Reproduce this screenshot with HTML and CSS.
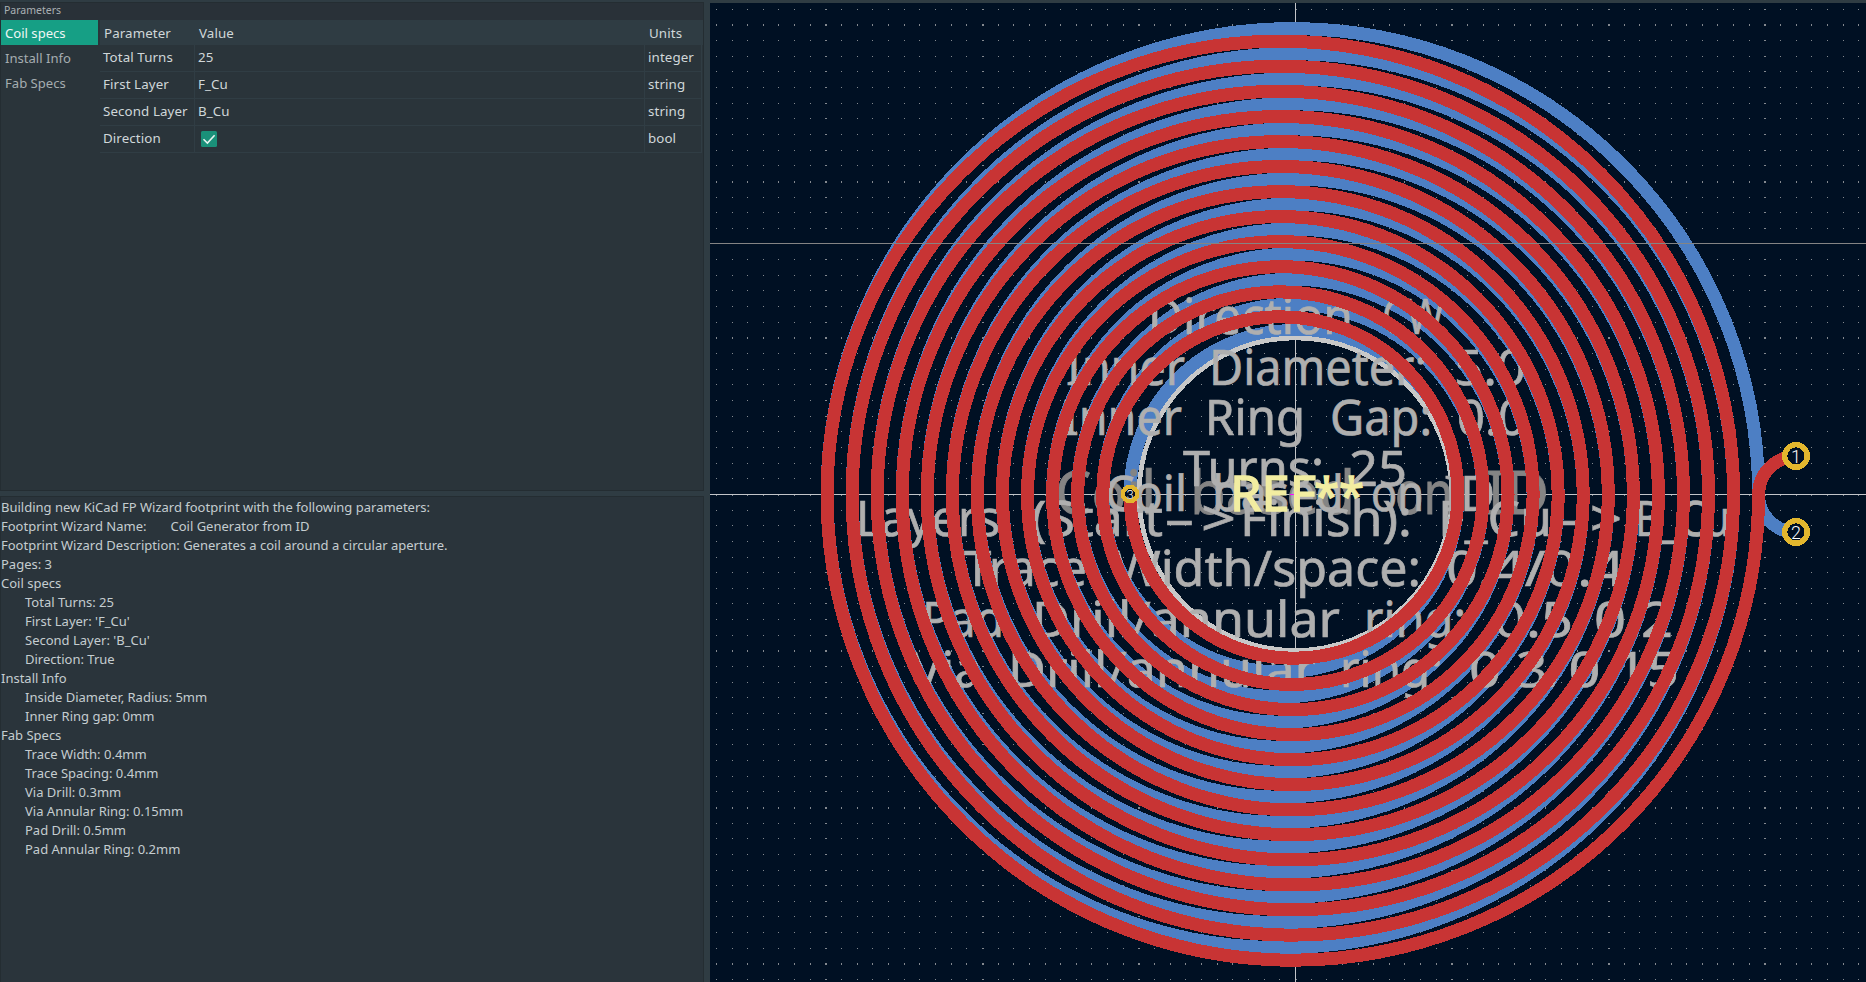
FILE: index.html
```html
<!DOCTYPE html>
<html lang="en">
<head>
<meta charset="utf-8">
<title>Footprint Wizard</title>
<link rel="stylesheet" href="styles.css">
</head>
<body>
<div class="window">
  <div class="sidebar">
    <section class="params">
      <div class="caption">Parameters</div>
      <div class="params-body">
        <ul class="pages">
          <li class="page active">Coil specs</li>
          <li class="page">Install Info</li>
          <li class="page">Fab Specs</li>
        </ul>
        <div class="grid">
          <div class="row head"><span>Parameter</span><span>Value</span><span>Units</span></div>
          <div class="row"><span>Total Turns</span><span>25</span><span>integer</span></div>
          <div class="row"><span>First Layer</span><span>F_Cu</span><span>string</span></div>
          <div class="row"><span>Second Layer</span><span>B_Cu</span><span>string</span></div>
          <div class="row"><span>Direction</span><span><svg class="check" viewBox="0 0 16 16"><rect width="16" height="16" rx="1.5" fill="#1a9079"/><path d="M2.5 8.2 6.4 12 13.6 4.2" fill="none" stroke="#e6f2ef" stroke-width="1.6"/></svg></span><span>bool</span></div>
        </div>
      </div>
    </section>
    <pre class="log">Building new KiCad FP Wizard footprint with the following parameters:
Footprint Wizard Name:<span class="tab"></span>Coil Generator from ID
Footprint Wizard Description: Generates a coil around a circular aperture.
Pages: 3
Coil specs
<span class="indent"></span>Total Turns: 25
<span class="indent"></span>First Layer: 'F_Cu'
<span class="indent"></span>Second Layer: 'B_Cu'
<span class="indent"></span>Direction: True
Install Info
<span class="indent"></span>Inside Diameter, Radius: 5mm
<span class="indent"></span>Inner Ring gap: 0mm
Fab Specs
<span class="indent"></span>Trace Width: 0.4mm
<span class="indent"></span>Trace Spacing: 0.4mm
<span class="indent"></span>Via Drill: 0.3mm
<span class="indent"></span>Via Annular Ring: 0.15mm
<span class="indent"></span>Pad Drill: 0.5mm
<span class="indent"></span>Pad Annular Ring: 0.2mm</pre>
  </div>
  <svg class="board" id="board" viewBox="710 3 1156 979" shape-rendering="crispEdges">
    <g id="dots" fill="#84898f"></g>
    <path d="M710 494.5H1866M1295.5 3V982" stroke="#c2c4c8" stroke-width="1"/>
    <path id="back" class="trace back"/>
    <circle cx="1295.4" cy="494.2" r="156.3" fill="none" stroke="#c8c8c8" stroke-width="4.7"/>
    <g id="value" class="fab dark"></g>
    <g id="notes" class="fab"></g>
    <path id="front" class="trace front"/>
    <path d="M1290 494.5h4" stroke="#ff00ff"/>
    <g id="ref" class="fab ref"></g>
    <g fill="#001023" stroke="#e3b72e">
      <circle cx="1796" cy="456" r="11.3" stroke-width="5.4"/>
      <circle cx="1796" cy="532" r="11.3" stroke-width="5.4"/>
      <circle cx="1130" cy="494" r="7.1" stroke-width="4.4"/>
    </g>
    <g class="num">
      <text x="1796" y="462.5">1</text>
      <text x="1796" y="538.5">2</text>
      <text class="small" x="1130" y="498.5">3</text>
    </g>
    <path d="M710 243.5H1866" stroke="#848484"/>
  </svg>
</div>
<script src="board.js"></script>
</body>
</html>
```
FILE: styles.css
```css
* { box-sizing: border-box; }
body {
  margin: 0;
  background: #2f3c43;
  color: #d0d7d9;
  font: 13.33px/19px "Noto Sans", sans-serif;
}
.window {
  display: flex;
  gap: 6px;
  width: 1866px;
  height: 982px;
  padding-top: 2px;
  overflow: hidden;
}
.sidebar {
  display: flex;
  flex-direction: column;
  gap: 5px;
  width: 704px;
}
.params {
  height: 489px;
  border: 1px solid #242d32;
  background: #2a343a;
}
.caption {
  height: 17px;
  padding-left: 3px;
  background: #293138;
  color: #a9b0b3;
  font-size: 10.5px;
  line-height: 15px;
}
.params-body { display: flex; gap: 2px; }
.pages {
  width: 98px;
  margin: 0;
  padding: 0;
  list-style: none;
  color: #a5adb0;
  font-size: 13.1px;
}
.page { height: 25px; padding-left: 4px; line-height: 26px; }
.active { background: #169f85; color: #eef6f4; }
.grid { flex: 1; }
.row {
  display: grid;
  grid-template-columns: 95px 450px 57px;
  height: 27px;
  margin-right: 1px;
  border-bottom: 1px solid #303d44;
  line-height: 25px;
}
.row span { padding-left: 3px; border-right: 1px solid #303d44; white-space: nowrap; letter-spacing: .1px; }
.row.head { height: 25px; margin: 0; border: 0; background: #2f3c43; line-height: 27px; }
.row.head span { padding-left: 4px; border: 0; }
.check { display: block; width: 16px; height: 16px; margin: 5px 0 0 3px; }
.log {
  flex: 1;
  margin: 0;
  padding: 1px 0 0;
  border: 1px solid #242d32;
  border-bottom: 0;
  background: #2a343b;
  font: 13px/19px "Noto Sans", sans-serif;
  color: #c5cdd0;
}
.tab, .indent { display: inline-block; width: 24px; }
.board {
  width: 1156px;
  height: 979px;
  margin-top: 1px;
  background: #001023;
}
.trace { fill: none; stroke-width: 13; }
.back { stroke: #4d7fc4; }
.front { stroke: #c83434; }
.fab { fill: #afafaf; stroke: #afafaf; stroke-width: .7; font-family: "Noto Sans", sans-serif; font-size: 49px; }
.dark { fill: #848484; stroke: #848484; font-size: 60px; stroke-width: .8; }
.ref { fill: #f2eda1; stroke: #f2eda1; stroke-width: 1.4; }
.num { fill: #fff; font: 300 18px Roboto, sans-serif; text-anchor: middle; }
.num .small { font-size: 13px; }
```
FILE: board.js
```js
const NS = "http://www.w3.org/2000/svg";
const OX = 1295, OY = 494, STEP = 15.65;

// Grid dots, every tenth line drawn two pixels thick
const dots = document.getElementById("dots");
for (let i = -37; i <= 36; i++) {
  for (let j = -31; j <= 31; j++) {
    const r = document.createElementNS(NS, "rect");
    r.setAttribute("x", Math.floor(OX + 0.4 + i * STEP));
    r.setAttribute("y", Math.floor(OY + 0.4 + j * STEP));
    r.setAttribute("width", i % 10 === 0 ? 2 : 1);
    r.setAttribute("height", j % 10 === 0 ? 2 : 1);
    dots.appendChild(r);
  }
}

// Coil halves are chains of semicircles; the back layer mirrors the front one
function coil(dir) {
  const y = 494.4, pitch = 25.06;
  let d = `M1130 ${y}`;
  for (let k = 0; k <= 12; k++) {
    const left = k === 0 ? 1130 : 1102.7 - pitch * (k - 1);
    const right = 1457.9 + pitch * k;
    const s = dir > 0 ? 0 : 1;
    const r = (right - left) / 2;
    d += `A${r} ${r} 0 0 ${s} ${right} ${y}`;
    if (k < 12) {
      const next = 1102.7 - pitch * k;
      const q = (right - next) / 2;
      d += `A${q} ${q} 0 0 ${s} ${next} ${y}`;
    }
  }
  return d + `A37.5 37.5 0 0 ${dir > 0 ? 1 : 0} 1796 ${y - dir * 37.8}`;
}
document.getElementById("front").setAttribute("d", coil(1));
document.getElementById("back").setAttribute("d", coil(-1));

// Words as [text, left, right, baseline]
function words(id, list) {
  const g = document.getElementById(id);
  for (const [text, x1, x2, y] of list) {
    const t = document.createElementNS(NS, "text");
    t.textContent = text;
    t.setAttribute("x", x1 - 3);
    t.setAttribute("y", y);
    t.setAttribute("textLength", x2 - x1 + 6);
    t.setAttribute("lengthAdjust", "spacingAndGlyphs");
    g.appendChild(t);
  }
}
words("value", [["Coil", 1058, 1153, 514], ["based", 1193, 1352, 514], ["on", 1398, 1450, 514], ["ID", 1489, 1546, 514]]);
words("notes", [
  ["Coil", 1108, 1184, 510.5], ["based", 1215, 1341, 510.5], ["on", 1374, 1421, 510.5], ["ID", 1447, 1492, 510.5],
  ["Direction", 1151, 1350, 334], ["CW", 1385, 1441, 334],
  ["Inner", 1069, 1182, 384.5], ["Diameter:", 1212, 1424, 384.5], ["5.0", 1457, 1523, 384.5],
  ["Inner", 1066, 1179, 435], ["Ring", 1208, 1302, 435], ["Gap:", 1333, 1429, 435], ["0.0", 1460, 1523, 435],
  ["Turns:", 1186, 1321, 485.5], ["25", 1352, 1404, 485.5],
  ["Layers", 859, 997, 535.5], ["(Start", 1034, 1160, 535.5], ["-", 1167, 1192, 535.5], [">", 1204, 1233, 535.5],
  ["Finish):", 1243, 1409, 535.5],
  ["F_Cu", 1441, 1549, 535.5], ["-", 1557, 1582, 535.5], [">", 1593, 1619, 535.5], ["B_Cu", 1638, 1727, 535.5],
  ["Trace", 967, 1084, 586], ["Width/space:", 1117, 1418, 586], ["0.4/0.4", 1449, 1621, 586],
  ["Pad", 925, 1001, 636.5], ["Drill/annular", 1035, 1337, 636.5], ["ring:", 1367, 1463, 636.5], ["0.5/0.2", 1497, 1670, 636.5],
  ["Via", 915, 979, 687], ["Drill/annular", 1011, 1313, 687], ["ring:", 1343, 1440, 687], ["0.3/0.15", 1472, 1676, 687]
]);
words("ref", [["REF", 1233, 1313, 510.5], ["**", 1317, 1361, 514]]);
```
